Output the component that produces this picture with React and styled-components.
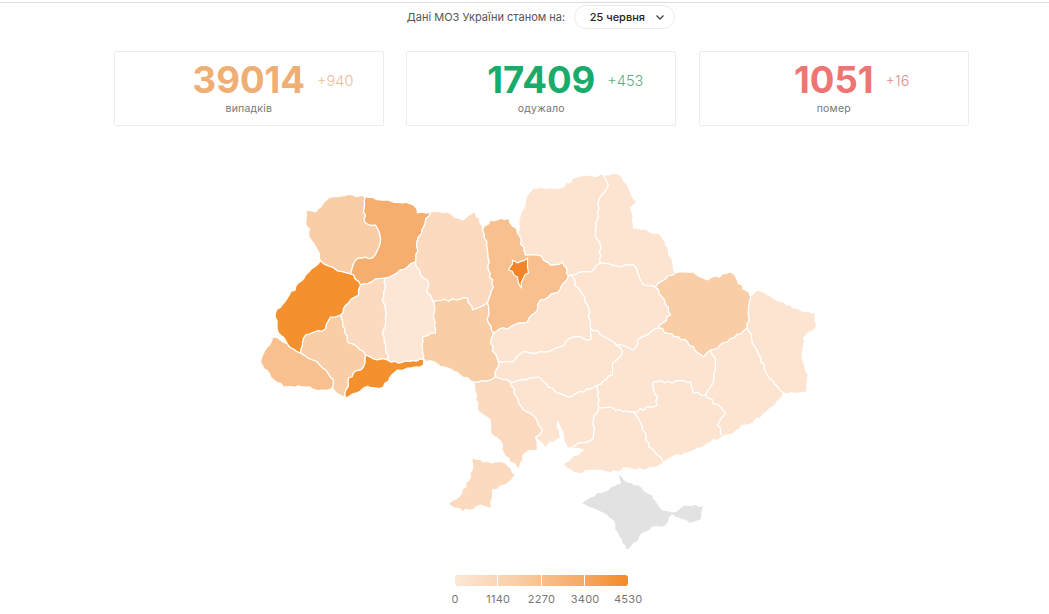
import React from 'react';
import styled, { createGlobalStyle } from 'styled-components';

const Global = createGlobalStyle`
  html, body { margin: 0; padding: 0; background: #fff; overflow: hidden; }
  body { font-family: Inter, "Noto Sans", sans-serif; }
`;
const Page = styled.div`width: 1083px; height: 614px; overflow: hidden;`;
const TopRule = styled.div`height: 1px; margin-top: 2px; background: #dcdcdc;`;
const Header = styled.div`
  display: flex; align-items: center; justify-content: center; gap: 8.5px;
  height: 24px; margin-top: 2px; padding-right: 1.5px; font-size: 11px; color: #555;
`;
const Pill = styled.div`
  display: flex; align-items: center; justify-content: space-between;
  box-sizing: border-box; width: 101px; height: 24px; padding: 0 8px 0 15px;
  border: 1px solid #ececec; border-radius: 12px;
  font-size: 11px; font-weight: 500; color: #222;
`;
const Cards = styled.div`
  display: grid; grid-template-columns: repeat(3, 270px); column-gap: 22.5px;
  justify-content: start; padding-left: 113.8px; margin-top: 22px;
`;
const Card = styled.div`
  box-sizing: border-box; height: 75px; padding-top: 7px;
  display: flex; flex-direction: column; align-items: center;
  border: 1px solid #ececec; border-radius: 2px;
`;
const NumberWrap = styled.div`position: relative; font-size: 36.6px; line-height: 42px;`;
const Total = styled.span`font-weight: 700; color: ${p => p.$color};`;
const Delta = styled.span`
  position: absolute; left: 100%; top: 0; margin-left: 12px; line-height: 44px;
  font-size: 14.5px; font-weight: 300; color: ${p => p.$color}; white-space: nowrap;
`;
const Label = styled.div`font-size: 10.5px; line-height: 16px; color: #777; letter-spacing: .2px;`;
const MapSvg = styled.svg`display: block; margin: 39px auto 0;`;
const Region = styled.path`
  fill: ${p => p.$fill}; stroke: #fff; stroke-width: 1.2; stroke-linejoin: round;
`;
const Legend = styled.div`width: 173px; margin: 15px auto 0; position: relative;`;
const Bar = styled.div`
  display: grid; grid-template-columns: repeat(4, 1fr); height: 11px; border-radius: 3px; overflow: hidden;
  background: linear-gradient(90deg, #fbe7d6 0%, #f9cfa8 35%, #f6ad6b 70%, #f48a25 100%);
`;
const Segment = styled.div`border-right: 1px solid #fff; &:last-child { border-right: 0; }`;
const Ticks = styled.div`
  display: flex; justify-content: space-between; margin: 6px -14px 0 -14px;
  font-size: 11px; line-height: 14px; color: #777;
`;
const Tick = styled.span`width: 28px; text-align: center; letter-spacing: .25px;`;

const L = '#fce4d1', M = '#fbdac0', N = '#f9cda5', O = '#f8c08e', P = '#f6ae6e', D = '#f4902d';

const regions = [
  ['Volyn', N, '305,211 315,212 328,198 352,195 365,197 363,212 365,223 375,225 380,238 377,250 372,258 358,258 352,267 350,274 337,271 328,266 320,261 317,250 308,233'],
  ['Rivne', P, '365,197 390,201 413,205 417,213 430,212 423,227 417,240 415,262 407,267 393,275 385,278 375,279 360,285 353,275 350,274 352,267 358,258 372,258 377,250 380,238 375,225 365,223 363,212'],
  ['Ternopil', M, '360,285 375,279 385,278 385,287 383,297 385,317 383,330 387,360 377,360 365,355 357,347 348,343 340,315 348,303 358,295'],
  ['Frankivsk', N, '330,317 340,315 348,343 357,347 365,355 363,367 348,378 345,398 336,393 332,388 333,380 322,368 312,360 300,353 305,335 325,329'],
  ['Zakarpattia', O, '272,337 280,340 287,344 300,353 312,360 322,368 333,380 332,388 322,390 305,387 283,387 270,377 260,362'],
  ['Lviv', D, '320,261 328,266 337,271 350,274 353,275 360,285 358,295 348,303 340,315 330,317 325,329 305,335 300,353 287,344 278,333 275,313 287,298 305,275'],
  ['Chernivtsi', D, '365,355 377,360 387,360 398,363 405,361 423,359 423,365 407,368 397,370 383,387 363,388 345,398 348,378 363,367'],
  ['Khmelnytskyi', '#fde6d6', '385,278 393,275 407,267 415,262 420,275 428,282 427,293 433,302 435,333 422,337 422,352 423,359 405,361 398,363 387,360 383,330 385,317 383,297 385,287'],
  ['Zhytomyr', M, '430,212 447,212 462,220 475,212 482,230 487,250 488,270 493,287 487,303 472,310 467,298 433,302 427,293 428,282 420,275 415,262 417,240 423,227'],
  ['Vinnytsia', N, '433,302 467,298 472,310 487,303 488,323 493,333 490,343 498,362 495,377 490,380 473,382 447,368 423,359 422,352 422,337 435,333'],
  ['Kyiv', O, '482,230 490,220 508,218 517,233 525,255 537,255 550,265 562,262 568,276 558,292 548,297 540,300 537,310 527,322 513,325 493,333 488,323 487,303 493,287 488,270 487,250'],
  ['KyivCity', '#f2842a', '512,260 517,263 527,258 527,267 528,273 523,278 521,288 517,277 508,270'],
  ['Chernihiv', L, '517,233 520,213 525,200 533,188 540,187 560,188 575,177 603,175 608,185 598,202 595,237 600,245 600,263 590,272 570,275 568,276 562,262 550,265 537,255 525,255'],
  ['Sumy', L, '603,175 608,175 618,174 628,188 637,202 630,208 633,228 658,233 668,248 675,273 665,279 655,287 643,285 633,265 620,267 600,263 600,245 595,237 598,202 608,185'],
  ['Poltava', L, '570,275 590,272 600,263 620,267 633,265 643,285 655,287 668,307 670,315 658,328 637,340 633,350 620,345 613,342 590,328 587,305'],
  ['Kharkiv', N, '655,287 665,279 675,273 683,272 693,272 707,280 730,272 750,297 747,328 727,342 710,350 703,357 687,342 658,328 670,315 668,307'],
  ['Luhansk', L, '757,290 783,302 803,312 815,313 815,328 803,338 803,362 808,375 805,393 783,393 767,375 757,352 747,328 750,297'],
  ['Donetsk', L, '710,350 727,342 747,328 757,352 767,375 783,393 775,405 760,418 745,425 723,437 717,425 725,413 705,395 713,382 715,365'],
  ['Dnipro', L, '613,342 620,345 633,350 637,340 658,328 687,342 703,357 710,350 715,365 713,382 705,395 693,393 690,382 653,382 657,405 633,412 598,407 597,385 612,375 612,363 622,352'],
  ['Zaporizhzhia', L, '653,382 690,382 693,393 705,395 725,413 717,425 723,437 697,448 670,458 663,463 660,457 648,447 640,423 633,412 657,405'],
  ['Kherson', L, '598,407 633,412 640,423 648,447 660,457 663,463 643,470 627,468 610,473 597,470 577,473 563,465 583,450 567,448 593,438 593,420'],
  ['Mykolaiv', L, '510,382 537,377 558,393 570,397 593,387 597,385 598,407 593,420 593,438 567,448 557,422 560,438 550,442 545,448 535,437 542,430 537,422 518,403'],
  ['Cherkasy', L, '537,310 540,300 548,297 558,292 568,276 570,275 587,305 590,328 590,340 573,337 560,347 547,352 522,352 513,362 498,362 490,343 493,333 513,325 527,322'],
  ['Kirovohrad', L, '498,362 513,362 522,352 547,352 560,347 573,337 590,340 590,328 613,342 622,352 612,363 612,375 597,385 593,387 570,397 558,393 537,377 510,382 495,377'],
  ['OdesaN', M, '473,382 490,380 495,377 510,382 518,403 537,422 542,430 535,437 537,450 525,453 518,470 503,453 502,445 490,433 490,420 477,410'],
  ['OdesaS', M, '472,457 483,462 495,462 505,463 515,475 505,485 492,490 490,503 492,508 480,505 462,512 448,503 457,498 470,477'],
  ['Crimea', '#e2e2e2', '616,473 622,477 627,482 638,485 643,490 652,495 662,510 672,512 683,505 703,505 700,520 688,523 672,515 663,527 652,527 643,533 637,542 625,550 617,533 612,520 600,512 580,505 590,497 610,487 620,483'],
];

const noise = (x, y) => {
  const s = Math.sin(x * 12.9898 + y * 78.233) * 43758.5453;
  return s - Math.floor(s) - 0.5;
};

// Subdivides every edge with a small displacement that depends only on the edge,
// so two neighbouring regions get the same rough border.
const toPath = (text) => {
  const pts = text.split(' ').map(s => s.split(',').map(Number));
  let d = '';
  pts.forEach((a, i) => {
    const b = pts[(i + 1) % pts.length];
    d += `${i ? 'L' : 'M'}${a[0]} ${a[1]} `;
    const flip = a[0] > b[0] || (a[0] === b[0] && a[1] > b[1]);
    const [p, q] = flip ? [b, a] : [a, b];
    const dx = q[0] - p[0], dy = q[1] - p[1];
    const len = Math.hypot(dx, dy);
    const n = Math.floor(len / 3.5);
    const mids = [];
    for (let k = 1; k < n; k++) {
      const t = k / n;
      const x = p[0] + dx * t, y = p[1] + dy * t;
      const w = noise(x, y) * 3;
      mids.push([x - (dy / len) * w, y + (dx / len) * w]);
    }
    if (flip) mids.reverse();
    mids.forEach(m => { d += `L${m[0].toFixed(1)} ${m[1].toFixed(1)} `; });
  });
  return d + 'Z';
};

const stats = [
  { total: '39014', delta: '+940', label: 'випадків', color: '#efae74', deltaColor: '#eabd9a' },
  { total: '17409', delta: '+453', label: 'одужало', color: '#18ab69', deltaColor: '#5aaf86' },
  { total: '1051', delta: '+16', label: 'помер', color: '#ef7474', deltaColor: '#e08f8f' },
];
const ticks = ['0', '1140', '2270', '3400', '4530'];

export default function App() {
  return (
    <Page>
      <Global />
      <TopRule />
      <Header>
        <span>Дані МОЗ України станом на:</span>
        <Pill>
          <span>25 червня</span>
          <svg width="12" height="12" viewBox="0 0 12 12" fill="none" stroke="#444" strokeWidth="1.3">
            <path d="M2.5 4.5 6 8l3.5-3.5" />
          </svg>
        </Pill>
      </Header>
      <Cards>
        {stats.map(s => (
          <Card key={s.label}>
            <NumberWrap>
              <Total $color={s.color}>{s.total}</Total>
              <Delta $color={s.deltaColor}>{s.delta}</Delta>
            </NumberWrap>
            <Label>{s.label}</Label>
          </Card>
        ))}
      </Cards>
      <MapSvg width="600" height="395" viewBox="241.5 165 600 395">
        {regions.map(([name, fill, pts]) => (
          <Region key={name} $fill={fill} d={toPath(pts)} />
        ))}
      </MapSvg>
      <Legend>
        <Bar><Segment /><Segment /><Segment /><Segment /></Bar>
        <Ticks>{ticks.map(t => <Tick key={t}>{t}</Tick>)}</Ticks>
      </Legend>
    </Page>
  );
}
